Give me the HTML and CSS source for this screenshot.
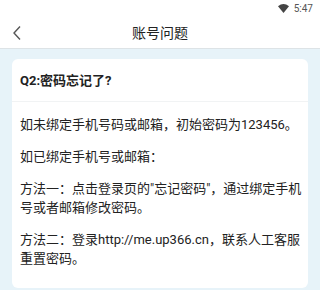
FILE: index.html
```html
<!DOCTYPE html>
<html lang="zh">
<head>
 <meta charset="UTF-8">
 <meta name="viewport" content="width=device-width, initial-scale=1.0">
 <title>账号问题</title>
 <link rel="stylesheet" href="styles.css">
</head>
<body>

 <div class="status-bar">
 <svg class="wifi" width="11" height="9" viewBox="0 0 11 9"><path d="M0 2.2 Q5.5 -2 11 2.2 L5.5 9 Z" fill="#444"/></svg>
 <span class="time">5:47</span>
 </div>

 <div class="header">
 <svg class="back" width="10" height="16" viewBox="0 0 10 16"><path d="M8 1.5 L2 8 L8 14.5" fill="none" stroke="#555" stroke-width="1.4"/></svg>
 <h1>账号问题</h1>
 </div>

 <div class="page">
 <div class="card">
 <h2 class="card-title">Q2:密码忘记了?</h2>
 <div class="card-body">
 <p>如未绑定手机号码或邮箱，初始密码为123456。</p>
 <p>如已绑定手机号或邮箱：</p>
 <p>方法一：点击登录页的"忘记密码"，通过绑定手机号或者邮箱修改密码。</p>
 <p>方法二：登录http://me.up366.cn，联系人工客服重置密码。</p>
 </div>
 </div>
 </div>

</body>
</html>
```
FILE: styles.css
```css
/* Gaya umum */
body {
margin: 0;
width: 320px;
height: 290px;
overflow: hidden;
font-family: Roboto, "Noto Sans CJK SC", sans-serif;
color: #222;
background: #e7f3f9;
}

/* Status bar */
.status-bar {
height: 16px;
background: #fff;
display: flex;
align-items: center;
justify-content: flex-end;
padding-right: 7px;
gap: 5px;
font-size: 10px;
color: #555;
}

/* Header */
.header {
height: 32px;
background: #fff;
border-bottom: 1px solid #dde3e6;
display: flex;
align-items: center;
justify-content: center;
position: relative;
}

.header h1 {
margin: 0;
font-size: 14px;
font-weight: normal;
color: #222;
}

.back {
position: absolute;
left: 12px;
top: 9px;
}

/* Halaman */
.page {
padding: 10px 12px;
}

.card {
background: #fff;
border-radius: 6px;
}

.card-title {
margin: 0;
padding: 12px 8px 10px;
font-size: 13px;
line-height: 20px;
font-weight: bold;
border-bottom: 1px solid #f1f3f4;
}

.card-body {
padding: 13px 6px 20px 8px;
font-size: 13px;
line-height: 19px;
}

.card-body p {
margin: 0 0 13px;
}

.card-body p:last-child {
margin-bottom: 0;
}
```
